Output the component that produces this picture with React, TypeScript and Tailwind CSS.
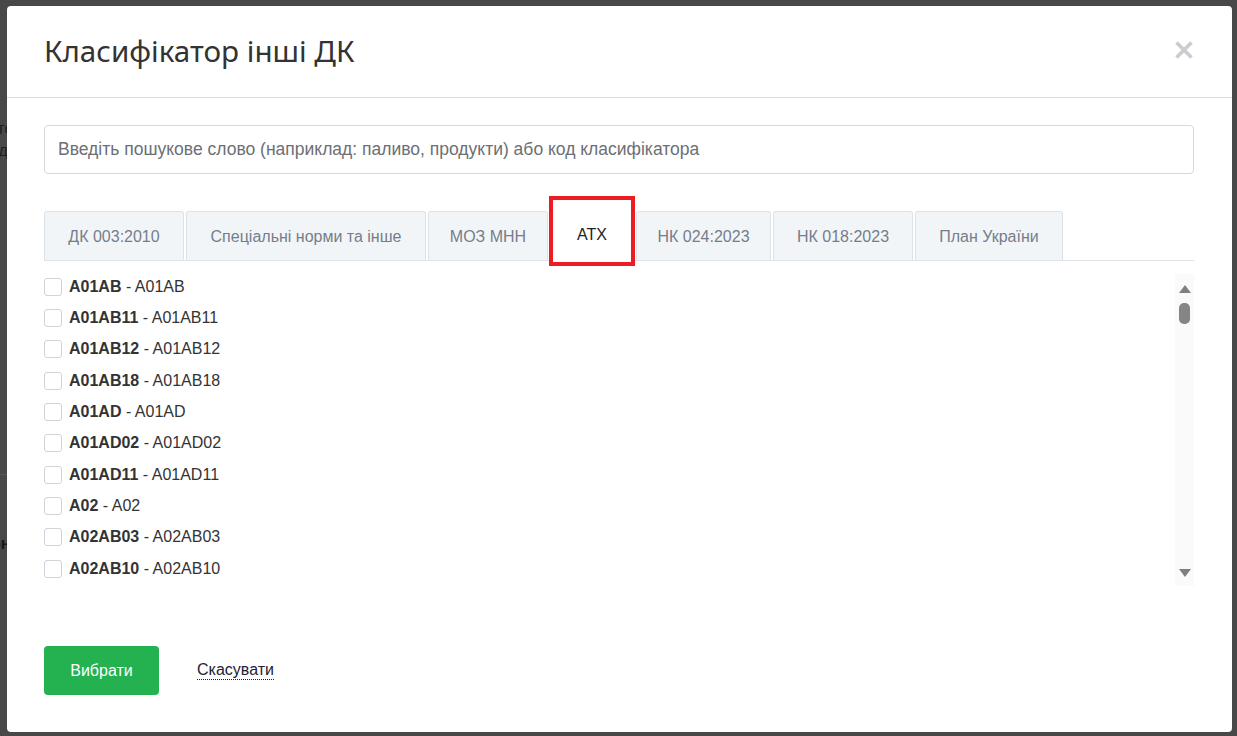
import React from "react";

const rows: [string, string][] = [
  ["A01AB", "A01AB"],
  ["A01AB11", "A01AB11"],
  ["A01AB12", "A01AB12"],
  ["A01AB18", "A01AB18"],
  ["A01AD", "A01AD"],
  ["A01AD02", "A01AD02"],
  ["A01AD11", "A01AD11"],
  ["A02", "A02"],
  ["A02AB03", "A02AB03"],
  ["A02AB10", "A02AB10"],
  ["A02AB11", "A02AB11"],
];

const tabs = [
  { label: "ДК 003:2010", w: "w-[140px]" },
  { label: "Спеціальні норми та інше", w: "w-[240px]" },
  { label: "МОЗ МНН", w: "w-[120px]" },
  { label: "АТХ", w: "w-[84px]", active: true },
  { label: "НК 024:2023", w: "w-[135px]" },
  { label: "НК 018:2023", w: "w-[140px]" },
  { label: "План України", w: "w-[148px]" },
];

export default function App() {
  return (
    <div
      className="relative w-[1237px] h-[736px] overflow-hidden bg-[#484848]"
      style={{ fontFamily: '"Liberation Sans", Arial, sans-serif' }}
    >
      {/* page content beneath the overlay */}
      <div className="absolute left-[-10px] top-[118px] text-[16px] leading-[22px] text-[#1c1c24]">
        <div>ого</div>
        <div>од</div>
      </div>
      <div className="absolute left-0 top-[474px] w-[20px] h-px bg-[#575757]" />
      <div className="absolute left-[-9px] top-[532px] text-[16px] font-bold text-[#16161e]">
        он
      </div>

      <div className="absolute left-[7px] top-[6px] w-[1225px] h-[726px] bg-white rounded-[4px] flex flex-col">
        {/* header */}
        <div className="h-[92px] border-b border-[#dcdde0] flex items-center justify-between pl-[37px] pr-[38px] shrink-0">
          <h1
            className="text-[29.6px] text-[#333333] leading-none pb-[2px]"
            style={{ fontFamily: '"Noto Sans", "Open Sans", sans-serif' }}
          >
            Класифікатор інші ДК
          </h1>
          <svg width="20" height="20" viewBox="0 0 20 20" className="mt-[-3px]">
            <path d="M2.5 2.5 L17.5 17.5 M17.5 2.5 L2.5 17.5" stroke="#c9ccd1" strokeWidth="3.6" strokeLinecap="butt" />
          </svg>
        </div>

        {/* body */}
        <div className="flex flex-col pl-[37px] pr-[38px] pt-[27px]">
          <div className="h-[49px] border border-[#d5d8dc] rounded-[4px] flex items-center px-[13px] text-[17.5px] text-[#6c6f75]">
            Введіть пошукове слово (наприклад: паливо, продукти) або код класифікатора
          </div>

          {/* tabs */}
          <div className="mt-[37px] flex gap-[2px] border-b border-[#dfe3e8] h-[50px]">
            {tabs.map((t) =>
              t.active ? (
                <div key={t.label} className={`relative ${t.w} h-[50px] bg-white flex items-center justify-center text-[16px] text-[#222222] pb-[2px]`}>
                  {t.label}
                  <div className="absolute left-[-1px] top-[-15px] w-[86px] h-[70px] border-[4px] border-[#ec1c24]" />
                </div>
              ) : (
                <div
                  key={t.label}
                  className={`${t.w} h-[49px] bg-[#f2f5f8] border border-b-0 border-[#dde2e7] rounded-t-[3px] flex items-center justify-center text-[16px] text-[#767d8a] pt-[1px]`}
                >
                  {t.label}
                </div>
              )
            )}
          </div>

          {/* list */}
          <div className="mt-[9px] h-[316px] flex">
            <div className="flex-1 overflow-hidden pt-[1px]">
              {rows.map(([code, name]) => (
                <div key={code} className="h-[31.33px] flex items-center text-[16px] text-[#333333]">
                  <span className="w-[18px] h-[18px] border border-[#cfd4da] rounded-[3px] bg-white shrink-0" />
                  <span className="ml-[7px]">
                    <b className="font-bold">{code}</b> - {name}
                  </span>
                </div>
              ))}
            </div>
            <div className="w-[19px] mt-[4px] h-[312px] bg-[#fafafa] flex flex-col items-center">
              <svg width="12" height="8" viewBox="0 0 12 8" className="mt-[11px]">
                <path d="M6 0 L12 8 L0 8 Z" fill="#7f7f7f" />
              </svg>
              <div className="mt-[10px] w-[11px] h-[21px] rounded-[5px] bg-[#858585]" />
              <div className="flex-1" />
              <svg width="12" height="8" viewBox="0 0 12 8" className="mb-[9px]">
                <path d="M0 0 L12 0 L6 8 Z" fill="#7f7f7f" />
              </svg>
            </div>
          </div>

          {/* footer */}
          <div className="mt-[60px] flex items-center">
            <button className="w-[115px] h-[49px] rounded-[4px] bg-[#23b24f] text-white text-[16px]">
              Вибрати
            </button>
            <span className="ml-[38px] text-[16px] text-[#222233] border-b border-dotted border-[#222222] leading-[18px]">
              Скасувати
            </span>
          </div>
        </div>
      </div>
    </div>
  );
}
